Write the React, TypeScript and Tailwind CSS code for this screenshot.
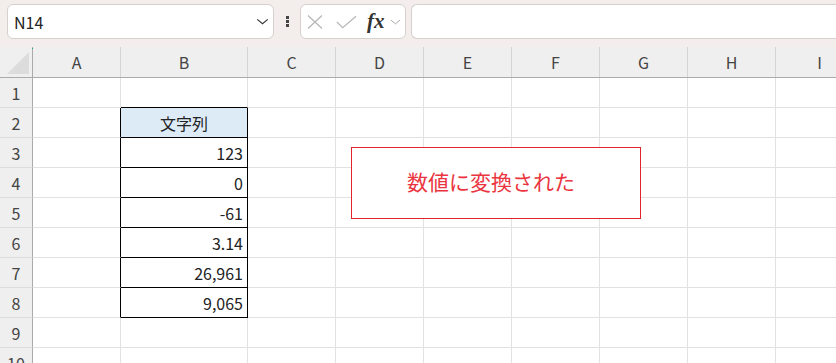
const columns = [
  { label: "A", width: "w-[88px]" },
  { label: "B", width: "w-[127px]" },
  { label: "C", width: "w-[88px]" },
  { label: "D", width: "w-[88px]" },
  { label: "E", width: "w-[88px]" },
  { label: "F", width: "w-[88px]" },
  { label: "G", width: "w-[88px]" },
  { label: "H", width: "w-[88px]" },
  { label: "I", width: "w-[88px]" },
];

const values: Record<number, string> = {
  3: "123",
  4: "0",
  5: "-61",
  6: "3.14",
  7: "26,961",
  8: "9,065",
};

const rows = [1, 2, 3, 4, 5, 6, 7, 8, 9, 10];

function Chevron({ className }: { className: string }) {
  return (
    <svg viewBox="0 0 14 8" className={className} fill="none">
      <path d="M1 1.5l6 5 6-5" stroke="currentColor" strokeWidth="1.3" />
    </svg>
  );
}

function FormulaBar() {
  return (
    <div className="flex h-[47px] shrink-0 items-start bg-[#f3edeb] pl-[7px] pt-[4px]">
      <div className="flex h-[35px] w-[267px] shrink-0 items-center justify-between rounded-[6px] border border-[#d6d1cf] bg-white pl-[6px] pr-[4px]">
        <span className="text-[16px] text-[#222]">N14</span>
        <Chevron className="h-[7px] w-[13px] text-[#333]" />
      </div>
      <div className="flex h-[35px] w-[26px] shrink-0 flex-col items-center justify-center gap-[1px]">
        <span className="h-[3px] w-[3px] bg-[#444]" />
        <span className="h-[3px] w-[3px] bg-[#444]" />
        <span className="h-[3px] w-[3px] bg-[#444]" />
      </div>
      <div className="flex h-[35px] w-[106px] shrink-0 items-center rounded-[6px] border border-[#d6d1cf] bg-white pl-[6px]">
        <svg viewBox="0 0 16 16" className="h-[16px] w-[16px] text-[#b5b5b5]" fill="none">
          <path d="M1 1.5l14 13M15 1.5l-14 13" stroke="currentColor" strokeWidth="1.2" />
        </svg>
        <svg viewBox="0 0 22 14" className="ml-[13px] h-[14px] w-[21px] text-[#b5b5b5]" fill="none">
          <path d="M1 7l6 6L21 1" stroke="currentColor" strokeWidth="1.2" />
        </svg>
        <span className="ml-[10px] font-['Liberation_Serif',serif] text-[21px] font-bold italic leading-none text-[#333]">
          fx
        </span>
        <Chevron className="ml-[5px] h-[6px] w-[11px] text-[#a8a8a8]" />
      </div>
      <div className="ml-[5px] h-[35px] flex-1 rounded-l-[6px] border border-r-0 border-[#d6d1cf] bg-white" />
    </div>
  );
}

export default function App() {
  return (
    <div className="flex h-[363px] w-[836px] flex-col overflow-hidden bg-white font-['Noto_Sans_CJK_JP','Noto_Sans',sans-serif] text-[#222]">
      <FormulaBar />
      <div className="relative flex-1">
        {/* column headers */}
        <div className="flex h-[31px] border-b border-[#ababab] bg-[#efefef]">
          <div className="relative h-full w-[33px] shrink-0 border-r border-[#ababab]">
            <svg viewBox="0 0 24 24" className="absolute bottom-[3px] right-[3px] h-[22px] w-[22px]">
              <path d="M24 0V24H0Z" fill="#dcdcdc" />
            </svg>
            <span className="absolute left-[32px] top-[1px] h-[1px] w-[1px] bg-[#21a366]" />
          </div>
          {columns.map((c) => (
            <div
              key={c.label}
              className={`${c.width} flex h-full shrink-0 items-center justify-center border-r border-[#d4d4d4] text-[16px] text-[#444]`}
            >
              {c.label}
            </div>
          ))}
        </div>
        {rows.map((r) => {
          const inTable = r >= 2 && r <= 8;
          return (
            <div key={r} className="flex h-[30px]">
              <div className="flex h-full w-[33px] shrink-0 items-center justify-center border-r border-b border-r-[#ababab] border-b-[#dcdcdc] bg-[#efefef] text-[16px] text-[#444]">
                {r}
              </div>
              {columns.map((c) => {
                const isB = c.label === "B";
                const isA = c.label === "A";
                const right =
                  (isA && inTable) || (isB && inTable) ? "border-r-black" : "border-r-[#e1e1e1]";
                const bottom =
                  isB && r >= 1 && r <= 8 ? "border-b-black" : "border-b-[#e1e1e1]";
                const fill = isB && r === 2 ? "bg-[#ddebf7]" : "bg-white";
                return (
                  <div
                    key={c.label}
                    className={`${c.width} ${right} ${bottom} ${fill} flex h-full shrink-0 items-center border-r border-b text-[16px] text-[#222]`}
                  >
                    {isB && r === 2 && <span className="w-full text-center">文字列</span>}
                    {isB && values[r] && (
                      <span className="w-full pr-[4px] text-right">{values[r]}</span>
                    )}
                  </div>
                );
              })}
            </div>
          );
        })}
        {/* shape placed on the sheet */}
        <div className="absolute left-[351px] top-[100px] flex h-[72px] w-[290px] items-center border border-[#e0242e] bg-white pb-[2px] pl-[55px]">
          <span className="text-[21px] text-[#ea3540]">数値に変換された</span>
        </div>
      </div>
    </div>
  );
}
